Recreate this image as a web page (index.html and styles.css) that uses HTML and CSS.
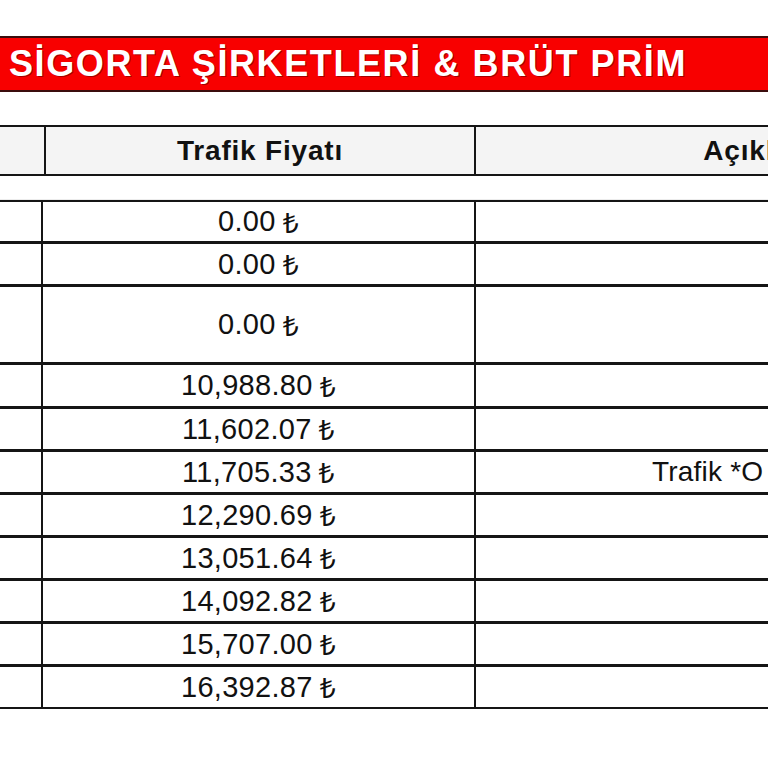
FILE: index.html
```html
<!DOCTYPE html>
<html lang="tr">
<head>
<meta charset="utf-8">
<title>Sigorta Şirketleri &amp; Brüt Prim</title>
<link rel="stylesheet" href="styles.css">
</head>
<body>
<div class="page">
  <div class="title-bar">SİGORTA ŞİRKETLERİ &amp; BRÜT PRİM</div>

  <div class="head-row">
    <div class="hcell first"></div>
    <div class="hcell price">Trafik Fiyatı</div>
    <div class="hcell desc">Açıklama</div>
  </div>

  <div class="separator"></div>

  <div class="grid">
    <div class="row h42"><div class="cell first"></div><div class="cell price">0.00 <span class="cur">₺</span></div><div class="cell desc"></div></div>
    <div class="row h43"><div class="cell first"></div><div class="cell price">0.00 <span class="cur">₺</span></div><div class="cell desc"></div></div>
    <div class="row h78"><div class="cell first"></div><div class="cell price">0.00 <span class="cur">₺</span></div><div class="cell desc"></div></div>
    <div class="row h44"><div class="cell first"></div><div class="cell price">10,988.80 <span class="cur">₺</span></div><div class="cell desc"></div></div>
    <div class="row h43"><div class="cell first"></div><div class="cell price">11,602.07 <span class="cur">₺</span></div><div class="cell desc"></div></div>
    <div class="row h43"><div class="cell first"></div><div class="cell price">11,705.33 <span class="cur">₺</span></div><div class="cell desc note">Trafik *O</div></div>
    <div class="row h43"><div class="cell first"></div><div class="cell price">12,290.69 <span class="cur">₺</span></div><div class="cell desc"></div></div>
    <div class="row h43"><div class="cell first"></div><div class="cell price">13,051.64 <span class="cur">₺</span></div><div class="cell desc"></div></div>
    <div class="row h43"><div class="cell first"></div><div class="cell price">14,092.82 <span class="cur">₺</span></div><div class="cell desc"></div></div>
    <div class="row h43"><div class="cell first"></div><div class="cell price">15,707.00 <span class="cur">₺</span></div><div class="cell desc"></div></div>
    <div class="row h42 last"><div class="cell first"></div><div class="cell price">16,392.87 <span class="cur">₺</span></div><div class="cell desc"></div></div>
  </div>
</div>
</body>
</html>
```

FILE: styles.css
```css
* { box-sizing: border-box; }

html, body {
  margin: 0;
  padding: 0;
  background: #ffffff;
}

body {
  font-family: "Liberation Sans", Arial, "DejaVu Sans", sans-serif;
  color: #111111;
}

.page {
  width: 768px;
  height: 768px;
  overflow: hidden;
  padding-top: 36px;
}

/* Red title bar */
.title-bar {
  width: 1060px;
  height: 56px;
  background: #f80000;
  border-top: 2px solid #3b0d0d;
  border-bottom: 2px solid #3b0d0d;
  color: #ffffff;
  font-weight: 700;
  font-size: 36px;
  letter-spacing: 1.6px;
  line-height: 52px;
  padding-left: 9px;
  white-space: nowrap;
  text-shadow: 1px 1px 0 rgba(60, 0, 0, 0.45);
}

/* Header row */
.head-row {
  margin-top: 33px;
  width: 1060px;
  height: 51px;
  display: grid;
  grid-template-columns: 44px 430px 1fr;
  border-top: 2px solid #151515;
  border-bottom: 2px solid #151515;
  background: #f4f4f4;
}

.hcell {
  display: flex;
  align-items: center;
  justify-content: center;
  font-weight: 700;
  font-size: 28px;
  letter-spacing: 0.8px;
  white-space: nowrap;
}

.hcell.price,
.hcell.desc {
  border-left: 2px solid #151515;
}

.separator {
  width: 1060px;
  height: 24px;
  border-bottom: 1px solid #ececec;
}

/* Data grid */
.grid {
  width: 1060px;
  border-top: 2px solid #151515;
}

.row {
  display: grid;
  grid-template-columns: 41px 433px 1fr;
  border-bottom: 3px solid #151515;
}

.row.last { border-bottom-width: 2px; }

.h42 { height: 42px; }
.h43 { height: 43px; }
.h44 { height: 44px; }
.h78 { height: 78px; }

.cell {
  display: flex;
  align-items: center;
  justify-content: center;
  font-size: 29px;
  letter-spacing: 0.3px;
  white-space: nowrap;
}

.cur {
  font-family: "Noto Sans", "DejaVu Sans", sans-serif;
  font-weight: 400;
  font-size: 28px;
  margin-left: 0.25em;
}

.cell.price,
.cell.desc {
  border-left: 2px solid #151515;
}

.cell.note {
  justify-content: flex-start;
  padding-left: 176px;
  font-size: 28px;
  letter-spacing: 0.2px;
}
```
